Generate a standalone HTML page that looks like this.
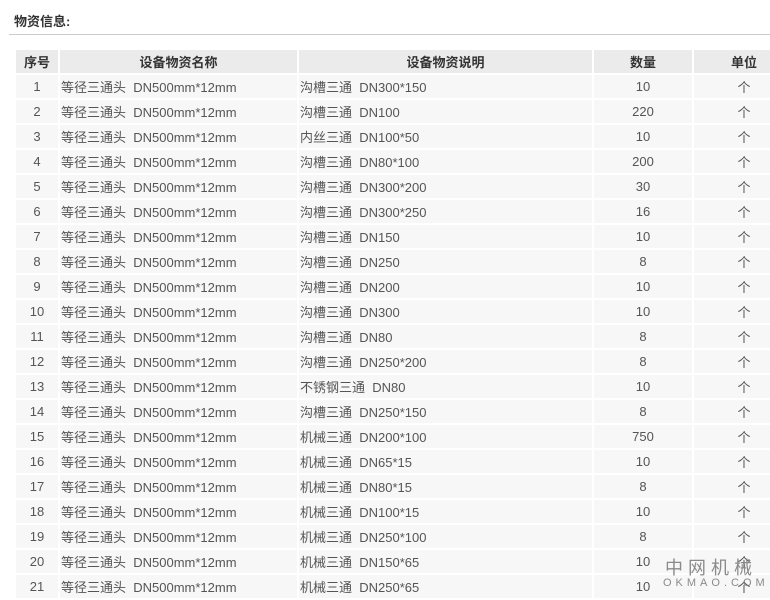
<!DOCTYPE html>
<html><head><meta charset="utf-8"><style>
body{margin:0;background:#fff;font-family:"Liberation Sans","Noto Sans CJK SC",sans-serif;width:770px;height:600px;overflow:hidden;position:relative}
.t{position:absolute;left:14px;top:11px;font-size:13px;font-weight:bold;color:#333}
.hr{position:absolute;left:9px;top:34px;width:761px;height:1px;background:#ccc}
table{position:absolute;left:14px;top:48px;border-collapse:collapse;font-size:13px;color:#555;table-layout:fixed;width:780px}
td,th{border:2px solid #fff;height:23px;padding:0;background:#f7f7f7;white-space:nowrap;overflow:hidden}
th{background:#ebebeb;color:#333;font-weight:bold;font-size:13px}
td{text-align:center}
td.l{text-align:left;padding-left:1px}
.wm{position:absolute;left:665px;top:554px;color:#777;font-size:18px;letter-spacing:5px;white-space:nowrap;opacity:.85}
.wm2{position:absolute;left:663px;top:577px;color:#777;font-size:11px;letter-spacing:4px;white-space:nowrap;opacity:.85}
</style></head><body>
<div class="t">物资信息:</div><div class="hr"></div>
<table>
<colgroup><col style="width:44px"><col style="width:239px"><col style="width:295px"><col style="width:100px"><col style="width:102px"></colgroup>
<tr><th>序号</th><th>设备物资名称</th><th>设备物资说明</th><th>数量</th><th>单位</th></tr>
<tr><td>1</td><td class="l">等径三通头&nbsp; DN500mm*12mm</td><td class="l">沟槽三通&nbsp; DN300*150</td><td>10</td><td>个</td></tr>
<tr><td>2</td><td class="l">等径三通头&nbsp; DN500mm*12mm</td><td class="l">沟槽三通&nbsp; DN100</td><td>220</td><td>个</td></tr>
<tr><td>3</td><td class="l">等径三通头&nbsp; DN500mm*12mm</td><td class="l">内丝三通&nbsp; DN100*50</td><td>10</td><td>个</td></tr>
<tr><td>4</td><td class="l">等径三通头&nbsp; DN500mm*12mm</td><td class="l">沟槽三通&nbsp; DN80*100</td><td>200</td><td>个</td></tr>
<tr><td>5</td><td class="l">等径三通头&nbsp; DN500mm*12mm</td><td class="l">沟槽三通&nbsp; DN300*200</td><td>30</td><td>个</td></tr>
<tr><td>6</td><td class="l">等径三通头&nbsp; DN500mm*12mm</td><td class="l">沟槽三通&nbsp; DN300*250</td><td>16</td><td>个</td></tr>
<tr><td>7</td><td class="l">等径三通头&nbsp; DN500mm*12mm</td><td class="l">沟槽三通&nbsp; DN150</td><td>10</td><td>个</td></tr>
<tr><td>8</td><td class="l">等径三通头&nbsp; DN500mm*12mm</td><td class="l">沟槽三通&nbsp; DN250</td><td>8</td><td>个</td></tr>
<tr><td>9</td><td class="l">等径三通头&nbsp; DN500mm*12mm</td><td class="l">沟槽三通&nbsp; DN200</td><td>10</td><td>个</td></tr>
<tr><td>10</td><td class="l">等径三通头&nbsp; DN500mm*12mm</td><td class="l">沟槽三通&nbsp; DN300</td><td>10</td><td>个</td></tr>
<tr><td>11</td><td class="l">等径三通头&nbsp; DN500mm*12mm</td><td class="l">沟槽三通&nbsp; DN80</td><td>8</td><td>个</td></tr>
<tr><td>12</td><td class="l">等径三通头&nbsp; DN500mm*12mm</td><td class="l">沟槽三通&nbsp; DN250*200</td><td>8</td><td>个</td></tr>
<tr><td>13</td><td class="l">等径三通头&nbsp; DN500mm*12mm</td><td class="l">不锈钢三通&nbsp; DN80</td><td>10</td><td>个</td></tr>
<tr><td>14</td><td class="l">等径三通头&nbsp; DN500mm*12mm</td><td class="l">沟槽三通&nbsp; DN250*150</td><td>8</td><td>个</td></tr>
<tr><td>15</td><td class="l">等径三通头&nbsp; DN500mm*12mm</td><td class="l">机械三通&nbsp; DN200*100</td><td>750</td><td>个</td></tr>
<tr><td>16</td><td class="l">等径三通头&nbsp; DN500mm*12mm</td><td class="l">机械三通&nbsp; DN65*15</td><td>10</td><td>个</td></tr>
<tr><td>17</td><td class="l">等径三通头&nbsp; DN500mm*12mm</td><td class="l">机械三通&nbsp; DN80*15</td><td>8</td><td>个</td></tr>
<tr><td>18</td><td class="l">等径三通头&nbsp; DN500mm*12mm</td><td class="l">机械三通&nbsp; DN100*15</td><td>10</td><td>个</td></tr>
<tr><td>19</td><td class="l">等径三通头&nbsp; DN500mm*12mm</td><td class="l">机械三通&nbsp; DN250*100</td><td>8</td><td>个</td></tr>
<tr><td>20</td><td class="l">等径三通头&nbsp; DN500mm*12mm</td><td class="l">机械三通&nbsp; DN150*65</td><td>10</td><td>个</td></tr>
<tr><td>21</td><td class="l">等径三通头&nbsp; DN500mm*12mm</td><td class="l">机械三通&nbsp; DN250*65</td><td>10</td><td>个</td></tr>
</table>
<div class="wm">中网机械</div>
<div class="wm2">OKMAO.COM</div>
</body></html>
